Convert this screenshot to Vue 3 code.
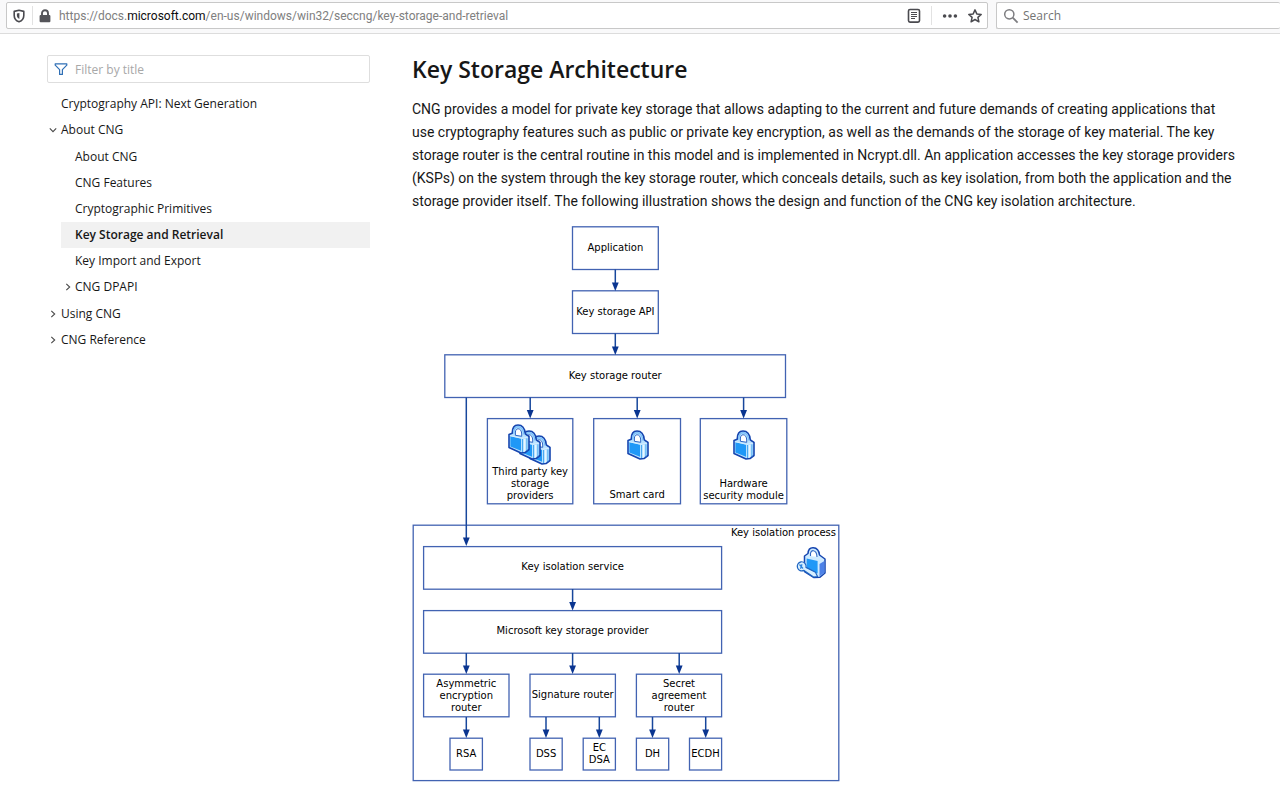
<script setup>
import { ref } from 'vue'

const filter = ref('')
const search = ref('')

const nav = [
  { title: 'Cryptography API: Next Generation' },
  {
    title: 'About CNG',
    open: true,
    children: [
      { title: 'About CNG' },
      { title: 'CNG Features' },
      { title: 'Cryptographic Primitives' },
      { title: 'Key Storage and Retrieval', current: true },
      { title: 'Key Import and Export' },
      { title: 'CNG DPAPI', closed: true },
    ],
  },
  { title: 'Using CNG', closed: true },
  { title: 'CNG Reference', closed: true },
]

// Diagram boxes: left, top, right, bottom, text lines, first baseline
const boxes = [
  { x: 572.5, y: 226.8, r: 658.3, b: 269.5, lines: ['Application'], t: 251 },
  { x: 572.5, y: 290.8, r: 658.3, b: 333.5, lines: ['Key storage API'], t: 315 },
  { x: 444.8, y: 354.8, r: 785.5, b: 397.5, lines: ['Key storage router'], t: 379 },
  { x: 487.4, y: 418.6, r: 572.8, b: 503.8, lines: ['Third party key', 'storage', 'providers'], t: 475 },
  { x: 593.7, y: 418.6, r: 680.5, b: 503.8, lines: ['Smart card'], t: 498 },
  { x: 700.3, y: 418.6, r: 786.8, b: 503.8, lines: ['Hardware', 'security module'], t: 487 },
  { x: 413.2, y: 525.2, r: 838.8, b: 780.6, lines: [], t: 0 },
  { x: 423.6, y: 546.6, r: 721.6, b: 589.2, lines: ['Key isolation service'], t: 570 },
  { x: 423.6, y: 610.6, r: 721.6, b: 653.2, lines: ['Microsoft key storage provider'], t: 634 },
  { x: 423.6, y: 674.2, r: 509, b: 716.8, lines: ['Asymmetric', 'encryption', 'router'], t: 687 },
  { x: 530, y: 674.2, r: 615.4, b: 716.8, lines: ['Signature router'], t: 698 },
  { x: 636.4, y: 674.2, r: 721.6, b: 716.8, lines: ['Secret', 'agreement', 'router'], t: 687 },
  { x: 450, y: 738.2, r: 482.4, b: 770, lines: ['RSA'], t: 757 },
  { x: 530, y: 738.2, r: 562.2, b: 770, lines: ['DSS'], t: 757 },
  { x: 583.2, y: 738.2, r: 615.4, b: 770, lines: ['EC', 'DSA'], t: 751 },
  { x: 636.4, y: 738.2, r: 668.7, b: 770, lines: ['DH'], t: 757 },
  { x: 689.5, y: 738.2, r: 721.6, b: 770, lines: ['ECDH'], t: 757 },
]

// Arrows: x, start, tip
const arrows = [
  [615.3, 269.5, 291], [615.3, 333.5, 355],
  [466.3, 397.5, 546], [530.2, 397.5, 418.5], [637.2, 397.5, 418.5], [743.6, 397.5, 418.5],
  [572.6, 589, 610.5],
  [466.3, 653, 674], [572.6, 653, 674], [679.2, 653, 674],
  [466.3, 717, 738], [546, 717, 738], [599.3, 717, 738], [652.5, 717, 738], [705.7, 717, 738],
]
</script>

<template>
  <div class="page">
    <header class="toolbar">
      <div class="field url">
        <svg class="shield" width="14" height="14" viewBox="0 0 14 14" aria-hidden="true">
          <path d="M7 1.2 11.8 2.4V6.5C11.8 9.4 9.8 11.8 7 12.8 4.2 11.8 2.2 9.4 2.2 6.5V2.4Z" fill="none" stroke="#4a4a4f" stroke-width="1.6" stroke-linejoin="round" />
          <path d="M7.4 3.9V10C5.7 9.2 4.9 8 4.9 6.2V4.4Z" fill="#4a4a4f" />
        </svg>
        <span class="rule"></span>
        <svg class="padlock" width="12" height="14" viewBox="0 0 12 14" aria-hidden="true">
          <path d="M3 6.5V4.2a3 3 0 0 1 6 0V6.5" fill="none" stroke="#55555a" stroke-width="1.9" />
          <rect x="0.6" y="6" width="10.8" height="7.2" rx="1" fill="#55555a" />
        </svg>
        <span class="address">https://docs.<b>microsoft.com</b>/en-us/windows/win32/seccng/key-storage-and-retrieval</span>
        <button class="tool" aria-label="Reader view">
          <svg width="14" height="16" viewBox="0 0 14 16" aria-hidden="true">
            <rect x="1.5" y="1.5" width="11" height="12.6" rx="1.5" fill="none" stroke="#4a4a4f" stroke-width="1.6" />
            <path d="M4 4.5H10M4 6.5H10M4 8.5H10M4 10.5H8" stroke="#4a4a4f" stroke-width="1" />
          </svg>
        </button>
        <span class="rule"></span>
        <button class="tool dots" aria-label="Page actions">
          <svg width="16" height="6" viewBox="0 0 16 6" aria-hidden="true">
            <g fill="#4a4a4f"><circle cx="2.6" cy="3" r="1.8" /><circle cx="8" cy="3" r="1.8" /><circle cx="13.4" cy="3" r="1.8" /></g>
          </svg>
        </button>
        <button class="tool" aria-label="Bookmark this page">
          <svg width="16" height="16" viewBox="0 0 16 16" aria-hidden="true">
            <path d="M8 1.9 9.8 5.9 14.2 6.4 10.9 9.4 11.9 13.8 8 11.5 4.1 13.8 5.1 9.4 1.8 6.4 6.2 5.9Z" fill="none" stroke="#4a4a4f" stroke-width="1.5" stroke-linejoin="round" />
          </svg>
        </button>
      </div>
      <label class="field search">
        <svg width="16" height="16" viewBox="0 0 16 16" aria-hidden="true">
          <circle cx="6.3" cy="6.3" r="4.6" fill="none" stroke="#7d7d80" stroke-width="1.5" />
          <path d="M9.7 9.7 14.6 14.6" stroke="#7d7d80" stroke-width="1.8" />
        </svg>
        <input v-model="search" type="text" placeholder="Search" aria-label="Search" />
      </label>
    </header>

    <div class="body">
      <aside class="side">
        <label class="filter">
          <svg width="14" height="14" viewBox="0 0 14 14" aria-hidden="true">
            <path d="M1.2 1.8H12.8V3.2L8.4 7.6V12.4H5.6V7.6L1.2 3.2Z" fill="none" stroke="#2f6fb5" stroke-width="1.2" stroke-linejoin="round" />
          </svg>
          <input v-model="filter" type="text" placeholder="Filter by title" aria-label="Filter by title" />
        </label>
        <nav>
          <ul class="tree">
            <li v-for="item in nav" :key="item.title">
              <a href="#" class="row">
                <svg v-if="item.open || item.closed" class="chev" :class="{ down: item.open }" width="8" height="8" viewBox="0 0 8 8" aria-hidden="true"><path d="M2.3 0.8 5.7 4 2.3 7.2" /></svg>
                {{ item.title }}
              </a>
              <ul v-if="item.children" class="branch">
                <li v-for="child in item.children" :key="child.title">
                  <a href="#" class="row" :class="{ current: child.current }">
                    <svg v-if="child.closed" class="chev" width="8" height="8" viewBox="0 0 8 8" aria-hidden="true"><path d="M2.3 0.8 5.7 4 2.3 7.2" /></svg>
                    {{ child.title }}
                  </a>
                </li>
              </ul>
            </li>
          </ul>
        </nav>
      </aside>

      <main class="article">
        <h1>Key Storage Architecture</h1>
        <p>
          CNG provides a model for private key storage that allows adapting to the current and future demands of creating applications that<br />
          use cryptography features such as public or private key encryption, as well as the demands of the storage of key material. The key<br />
          storage router is the central routine in this model and is implemented in Ncrypt.dll. An application accesses the key storage providers<br />
          (KSPs) on the system through the key storage router, which conceals details, such as key isolation, from both the application and the<br />
          storage provider itself. The following illustration shows the design and function of the CNG key isolation architecture.
        </p>
        <svg class="diagram" width="428" height="556" viewBox="412 226 428 556" role="img" aria-label="CNG key isolation architecture">
          <defs>
            <g id="lock">
              <path d="M1 10.5 4.2 9.3C4.2 4.5 6.2 1 10 1 14 1 16.8 4.5 17.3 9.8L21 12.5V25.5L17 28.5 13 29 1 23.5Z" fill="#b9e2ff" stroke="#1545b0" stroke-width="1.6" stroke-linejoin="round" />
              <path d="M7.4 11.3V8C7.6 6 8.6 4.8 10.2 4.8 12.2 4.8 13.7 7 13.7 10V12.3Z" fill="#fff" stroke="#2f66c4" stroke-width="1" />
              <path d="M2.4 12.3 13 14.6V26.8L2.4 22.4Z" fill="#1f98f7" />
              <path d="M2.3 11.7 13.4 14.3 20 13" fill="none" stroke="#d5eeff" stroke-width="1" />
              <path d="M14.5 15V28M18.9 14.3V26.5" stroke="#4aa8f0" stroke-width="1" />
              <path d="M16.7 15V27.5" stroke="#eefaff" stroke-width="1.2" />
              <path d="M5.9 9.8V7.2C6.4 4.4 8 2.8 10.2 2.8 13.2 2.8 15.6 6 15.7 10.5" fill="none" stroke="#7cc0fa" stroke-width="1.4" />
            </g>
          </defs>

          <rect v-for="(b, i) in boxes" :key="'b' + i" class="box" :x="b.x" :y="b.y" :width="b.r - b.x" :height="b.b - b.y" />
          <g v-for="(a, i) in arrows" :key="'a' + i">
            <line class="wire" :x1="a[0]" :x2="a[0]" :y1="a[1]" :y2="a[2] - 6" />
            <path class="head" :d="`M${a[0] - 3.4} ${a[2] - 8.6}h6.8l-3.4 8.6z`" />
          </g>
          <g v-for="(b, i) in boxes" :key="'t' + i">
            <text v-for="(line, n) in b.lines" :key="line" class="label" text-anchor="middle" :x="(b.x + b.r) / 2" :y="b.t + n * 12">{{ line }}</text>
          </g>
          <text class="label" text-anchor="end" x="836" y="536">Key isolation process</text>

          <use href="#lock" x="529" y="435" />
          <use href="#lock" x="519" y="430" />
          <use href="#lock" x="508" y="424" />
          <use href="#lock" x="627" y="430" />
          <use href="#lock" x="733" y="430" />

          <g stroke-linejoin="round">
            <path d="M804.5 556 808 553.5C808.3 549.5 810.4 547.6 813.3 547.8 817 548 819 550.5 819.5 555L825 559V573L820 577.2 814 577.5 804.5 571.5Z" fill="#cdeaff" stroke="#1545b0" stroke-width="1.5" />
            <path d="M819.5 564 824.4 561V572.6L819.5 576.6Z" fill="#4d82e8" />
            <path d="M810.5 556V553.2C811 551.2 812 550.5 813.4 550.7 815.6 551 816.9 553 817 557" fill="#fff" stroke="#2f66c4" stroke-width="1.1" />
            <path d="M806.6 558.6 817.6 561V573.5L806.6 568.8Z" fill="#1f98f7" />
            <path d="M801 561.8A4.6 4.6 0 0 1 806 567.4L815.5 572.3 817.5 576.5 813.5 577 804 570.4A4.6 4.6 0 1 1 801 561.8Z" fill="#d7efff" stroke="#1f65c2" stroke-width="1.2" />
            <path d="M799.5 564.5 803 568.5M802 564.2 800.5 568.7" stroke="#2a82dd" stroke-width="1.2" />
          </g>
        </svg>
      </main>
    </div>
  </div>
</template>

<style>
html,
body {
  background: #fff;
}
</style>

<style scoped>
.page {
  font-family: "Open Sans", "Noto Sans", sans-serif;
  color: #171717;
  overflow: hidden;
}
.toolbar {
  display: flex;
  gap: 8px;
  height: 31px;
  padding: 2px 0 0 6px;
  background: #f9f9fa;
  border-bottom: 1px solid #dcdcdc;
}
.field {
  display: flex;
  align-items: center;
  height: 27px;
  box-sizing: border-box;
  border: 1px solid #c8c8c8;
  border-radius: 2px;
  background: #fff;
  font-size: 12px;
}
.url {
  flex: 1;
  padding: 0 0 0 5px;
}
.search {
  width: 284px;
  padding-left: 6px;
  gap: 4px;
  border-right: 0;
}
.rule {
  width: 1px;
  height: 19px;
  background: #e2e2e2;
}
.shield {
  margin-right: 6px;
}
.padlock {
  margin: 0 8px 0 6px;
}
.address {
  flex: 1;
  color: #808080;
  font-family: Roboto, "Open Sans", sans-serif;
  white-space: nowrap;
}
.address b {
  color: #0c0c0d;
  font-weight: 400;
}
.tool {
  display: flex;
  align-items: center;
  justify-content: center;
  width: 25px;
  height: 24px;
  padding: 0;
  border: 0;
  background: none;
}
.url .tool + .rule {
  margin: 0 5px;
}
input {
  flex: 1;
  min-width: 0;
  padding: 0;
  border: 0;
  outline: 0;
  background: none;
  font: inherit;
}
.search input::placeholder {
  color: #737373;
}
.body {
  display: flex;
  gap: 42px;
  padding: 21px 24px 10px 47px;
}
.side {
  flex: none;
  width: 323px;
}
.filter {
  display: flex;
  align-items: center;
  gap: 7px;
  height: 28px;
  box-sizing: border-box;
  padding: 0 6px;
  border: 1px solid #dedede;
  border-radius: 2px;
  font-size: 12px;
}
.filter input::placeholder {
  color: #a8a8a8;
}
ul {
  margin: 0;
  padding: 0;
  list-style: none;
}
.tree {
  padding: 8px 0 0 14px;
}
.branch {
  padding: 1px 0;
}
.branch .row {
  padding-left: 14px;
}
.row {
  position: relative;
  display: block;
  height: 26px;
  line-height: 26px;
  font-size: 12px;
  color: #171717;
  text-decoration: none;
  white-space: nowrap;
}
.current {
  background: #f1f1f1;
  font-weight: 600;
}
.chev {
  position: absolute;
  top: 9px;
  left: -12px;
  fill: none;
  stroke: #4a4a4a;
  stroke-width: 1.1;
}
.branch .chev {
  left: 3px;
}
.down {
  transform: rotate(90deg);
}
.article {
  flex: 1;
  min-width: 0;
}
h1 {
  margin: 0;
  font-size: 23px;
  line-height: 28px;
  font-weight: 600;
}
p {
  margin: 15px 0 0;
  font-family: Roboto, "Open Sans", sans-serif;
  font-size: 14px;
  line-height: 23px;
  white-space: nowrap;
}
.diagram {
  display: block;
  margin-top: 13px;
}
.box {
  fill: none;
  stroke: #4263b2;
  stroke-width: 1.3;
}
.wire {
  stroke: #17479c;
  stroke-width: 1.5;
}
.head {
  fill: #0a3590;
}
.label {
  font-family: "DejaVu Sans", Verdana, sans-serif;
  font-size: 10px;
  fill: #000;
}
</style>
